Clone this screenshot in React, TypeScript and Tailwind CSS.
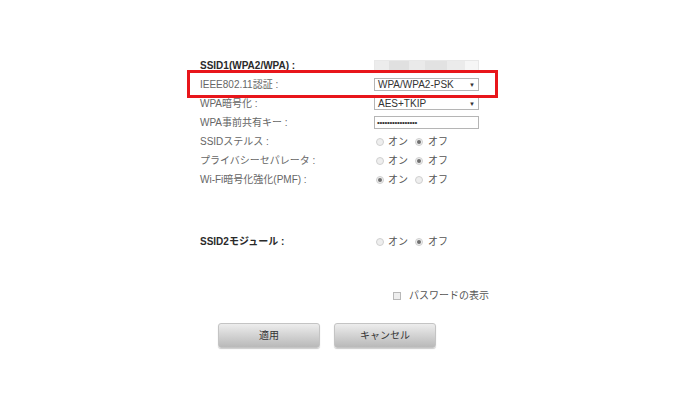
import React from "react";

const Radio = ({ checked }: { checked?: boolean }) => (
  <span className="inline-flex items-center justify-center w-[8px] h-[8px] rounded-full border border-[#d0d0d0] bg-[#eeeeee]">
    {checked && <span className="w-[4px] h-[4px] rounded-full bg-[#707070]" />}
  </span>
);

const OnOff = ({ on }: { on: boolean }) => (
  <div className="flex items-center text-[10px] text-[#555] pl-[2px]">
    <Radio checked={on} />
    <span className="ml-[4px] w-[27px]">オン</span>
    <Radio checked={!on} />
    <span className="ml-[5px]">オフ</span>
  </div>
);

const Row = ({ label, bold, children }: { label: string; bold?: boolean; children: React.ReactNode }) => (
  <div className="flex items-center h-[19px]">
    <div className={bold ? "w-[174px] text-[10px] font-bold text-[#2a2a2a]" : "w-[174px] text-[10px] text-[#666]"}>
      {label}
    </div>
    {children}
  </div>
);

const Select = ({ value }: { value: string }) => (
  <div className="flex items-center justify-between w-[105px] h-[13px] border border-[#b5b5b5] bg-white px-[3px] text-[10px] leading-none text-[#333]">
    <span>{value}</span>
    <span className="text-[6px]">▼</span>
  </div>
);

export default function App() {
  return (
    <div
      className="w-[700px] h-[400px] bg-white pl-[200px] pt-[56px]"
      style={{ fontFamily: '"Liberation Sans", "Noto Sans CJK JP", sans-serif' }}
    >
      <div className="flex flex-col">
        <Row label="SSID1(WPA2/WPA) :" bold>
          <div className="flex w-[105px] h-[12px] border border-[#e8e8e8] overflow-hidden">
            <div className="w-[14px] bg-[#ececec]" />
            <div className="w-[20px] bg-[#e0e0e0]" />
            <div className="w-[16px] bg-[#eaeaea]" />
            <div className="w-[22px] bg-[#e2e2e2]" />
            <div className="w-[18px] bg-[#ebebeb]" />
            <div className="flex-1 bg-[#f6f6f6]" />
          </div>
        </Row>
        <div className="relative">
          <Row label="IEEE802.11認証 :">
            <Select value="WPA/WPA2-PSK" />
          </Row>
          <div className="absolute left-[-13px] top-[-5px] w-[311px] h-[28px] border-[3px] border-[#e8161b]" />
        </div>
        <Row label="WPA暗号化 :">
          <Select value="AES+TKIP" />
        </Row>
        <Row label="WPA事前共有キー :">
          <div className="flex items-center w-[105px] h-[13px] border border-[#b5b5b5] bg-white px-[2px] text-[8px] leading-none tracking-[-0.3px] text-[#333]">
            ••••••••••••••••
          </div>
        </Row>
        <Row label="SSIDステルス :">
          <OnOff on={false} />
        </Row>
        <Row label="プライバシーセパレータ :">
          <OnOff on={false} />
        </Row>
        <Row label="Wi-Fi暗号化強化(PMF) :">
          <OnOff on={true} />
        </Row>

        <div className="mt-[43px]">
          <Row label="SSID2モジュール :" bold>
            <OnOff on={false} />
          </Row>
        </div>

        <div className="flex items-center h-[19px] mt-[35px] pl-[193px]">
          <span className="w-[8px] h-[8px] border border-[#b8b8b8] bg-[#eeeeee]" />
          <span className="ml-[8px] text-[10px] text-[#555]">パスワードの表示</span>
        </div>

        <div className="flex gap-[14px] mt-[18px] pl-[18px]">
          <button className="w-[102px] h-[25px] rounded-[3px] border border-[#c4c4c4] bg-gradient-to-b from-[#ededed] to-[#b9b9b9] shadow-[0_1px_1px_rgba(0,0,0,0.2)] text-[10px] text-[#333]">
            適用
          </button>
          <button className="w-[102px] h-[25px] rounded-[3px] border border-[#c4c4c4] bg-gradient-to-b from-[#ededed] to-[#b9b9b9] shadow-[0_1px_1px_rgba(0,0,0,0.2)] text-[10px] text-[#333]">
            キャンセル
          </button>
        </div>
      </div>
    </div>
  );
}
